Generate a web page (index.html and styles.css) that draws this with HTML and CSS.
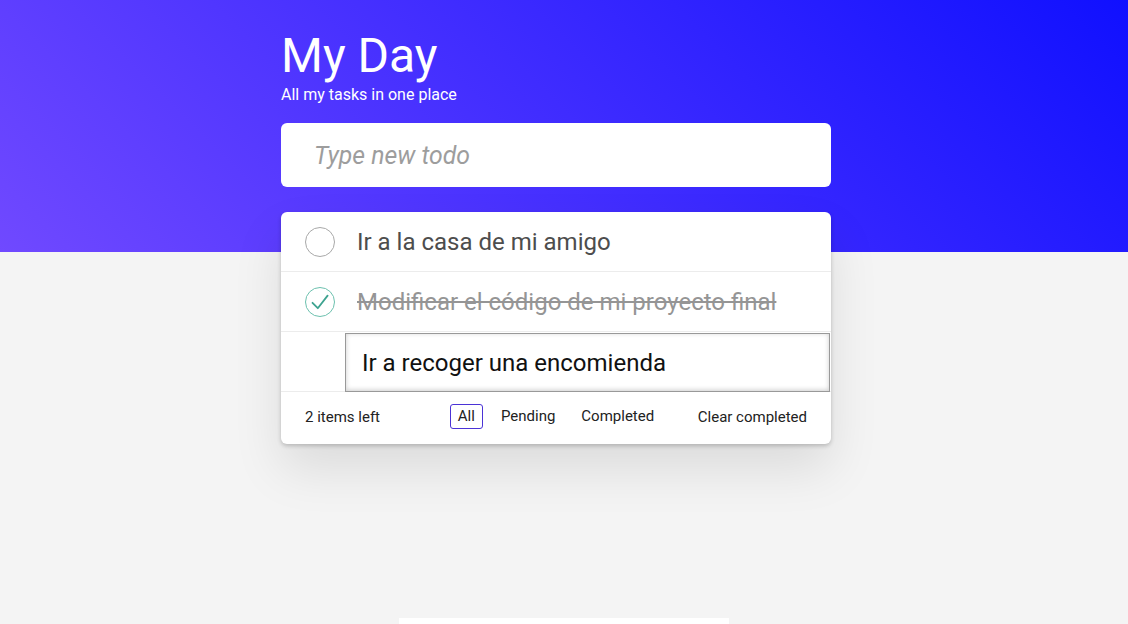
FILE: index.html
```html
<!DOCTYPE html>
<html lang="en">
<head>
<meta charset="utf-8">
<title>My Day</title>
<link rel="stylesheet" href="styles.css">
</head>
<body>
<main class="app">
  <header class="app-header">
    <h1 class="title">My Day</h1>
    <p class="subtitle">All my tasks in one place</p>
    <input class="new-todo" type="text" placeholder="Type new todo">
  </header>
  <section class="card">
    <ul class="todo-list">
      <li class="todo">
        <span class="check">
          <svg width="30" height="30" viewBox="0 0 30 30"><circle cx="15" cy="15" r="14.5" fill="none" stroke="#a8a8a8" stroke-width="1"/></svg>
        </span>
        <span class="label">Ir a la casa de mi amigo</span>
      </li>
      <li class="todo done">
        <span class="check">
          <svg width="30" height="30" viewBox="0 0 30 30"><circle cx="15" cy="15" r="14.5" fill="none" stroke="#6cc0ae" stroke-width="1"/><path d="M7.5 15.8 L12.8 21.2 L22.6 8.6" fill="none" stroke="#3ea390" stroke-width="1.8" stroke-linecap="round" stroke-linejoin="round"/></svg>
        </span>
        <span class="label">Modificar el código de mi proyecto final</span>
      </li>
      <li class="todo editing">
        <input class="edit" type="text" value="Ir a recoger una encomienda">
      </li>
    </ul>
    <footer class="footer">
      <span class="count">2 items left</span>
      <nav class="filters">
        <a class="filter selected">All</a>
        <a class="filter">Pending</a>
        <a class="filter">Completed</a>
      </nav>
      <span class="clear">Clear completed</span>
    </footer>
  </section>
  <div class="bottom-strip"></div>
</main>
</body>
</html>
```

FILE: styles.css
```css
html, body {
  margin: 0;
  padding: 0;
}
body {
  font-family: Roboto, "Liberation Sans", sans-serif;
  background:
    linear-gradient(45deg, #7049ff 0%, #1010ff 100%) top left / 100% 252px no-repeat,
    #f4f4f4;
  min-height: 624px;
  overflow: hidden;
}
.app {
  width: 550px;
  margin-left: calc(50% - 283px);
  padding-top: 28px;
}
.app-header {
  display: flex;
  flex-direction: column;
}
.title {
  margin: 0;
  font-size: 48px;
  font-weight: 400;
  line-height: 56px;
  color: #fff;
}
.subtitle {
  margin: 1px 0 0;
  font-size: 16px;
  line-height: 19px;
  color: #fff;
}
.new-todo {
  margin-top: 19px;
  height: 64px;
  box-sizing: border-box;
  border: none;
  border-radius: 6px;
  padding: 0 33px;
  font-family: inherit;
  font-size: 24.8px;
  color: #333;
  background: #fff;
  outline: none;
}
.new-todo::placeholder {
  font-style: italic;
  color: #9d9d9d;
}
.card {
  margin-top: 25px;
  background: #fff;
  border-radius: 6px;
  box-shadow: 0 2px 4px rgba(0,0,0,0.2), 0 25px 50px rgba(0,0,0,0.1);
  overflow: hidden;
}
.todo-list {
  list-style: none;
  margin: 0;
  padding: 0;
}
.todo {
  height: 59px;
  border-bottom: 1px solid #ececec;
  display: flex;
  align-items: center;
  padding-left: 24px;
  gap: 22px;
}
.check {
  width: 30px;
  height: 30px;
  display: block;
  flex: none;
}
.check svg {
  display: block;
}
.label {
  font-size: 24px;
  color: #4d4d4d;
  white-space: nowrap;
}
.done .label {
  color: #959595;
  text-decoration: line-through;
}
.editing {
  padding-left: 64px;
  padding-right: 1px;
  align-items: stretch;
}
.edit {
  flex: 1;
  min-width: 0;
  box-sizing: border-box;
  height: 59px;
  margin-top: 1px;
  border: 1px solid #999;
  box-shadow: inset 0 -1px 5px 0 rgba(0,0,0,0.2);
  padding: 0 16px;
  font-family: inherit;
  font-size: 24px;
  color: #111;
  outline: none;
  background: #fff;
}
.footer {
  height: 52px;
  box-sizing: border-box;
  padding: 0 24px 3px;
  display: grid;
  grid-template-columns: 1fr auto 1fr;
  align-items: center;
  font-size: 15px;
  color: #222;
}
.filters {
  display: flex;
  gap: 10px;
}
.filter {
  padding: 3px 7px;
  border: 1px solid transparent;
  border-radius: 3px;
  line-height: 17px;
}
.filter.selected {
  border-color: #4b33d6;
}
.clear {
  justify-self: end;
}
.bottom-strip {
  width: 330px;
  height: 20px;
  margin: 174px auto 0;
  background: #fff;
  position: relative;
  left: 8px;
}
```
